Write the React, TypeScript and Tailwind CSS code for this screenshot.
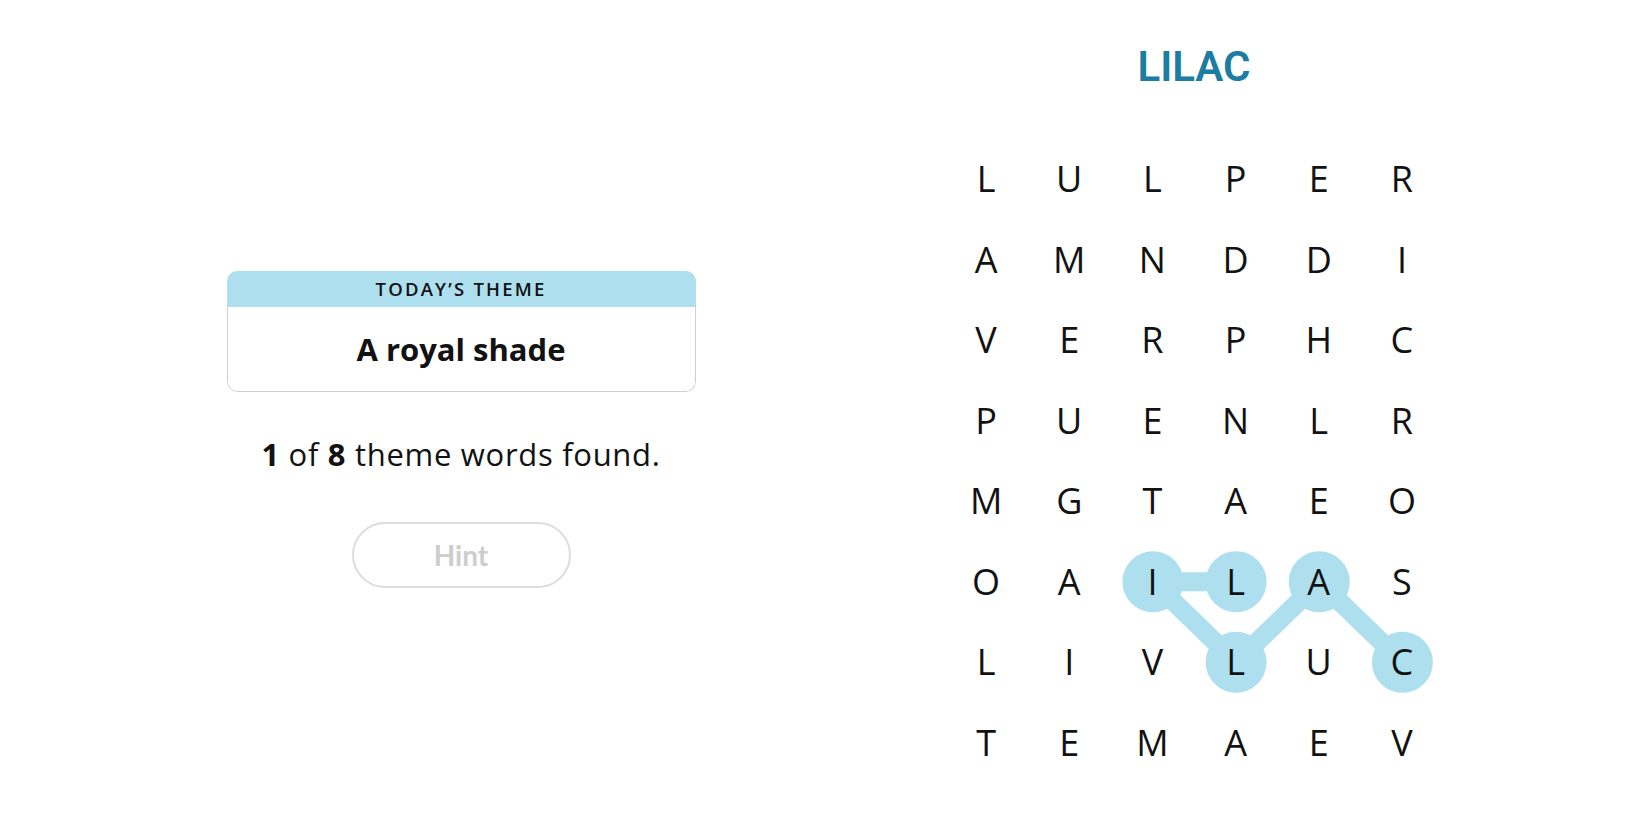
const grid = [
  "LULPER",
  "AMNDDI",
  "VERPHC",
  "PUENLR",
  "MGTAEO",
  "OAILAS",
  "LIVLUC",
  "TEMAEV",
]

const CW = 499 / 6
const RH = 80.5

// path of the found word, as [col, row]
const found: [number, number][] = [
  [3, 5],
  [2, 5],
  [3, 6],
  [4, 5],
  [5, 6],
]

const cx = (c: number) => CW * c + CW / 2
const cy = (r: number) => RH * r + RH / 2

function ThemeCard() {
  return (
    <div className="w-[469px] rounded-[10px] overflow-hidden">
      <div className="h-[36px] bg-[#aedfee] flex items-center justify-center">
        <span className="text-[18.5px] font-semibold tracking-[2.2px] text-[#121212]">
          TODAY’S THEME
        </span>
      </div>
      <div className="h-[85px] border-x border-b border-[#d0d0d0] rounded-b-[10px] flex items-center justify-center">
        <span className="text-[31px] font-bold text-[#121212]">A royal shade</span>
      </div>
    </div>
  )
}

function Board() {
  const pts = found.map(([c, r]) => `${cx(c)},${cy(r)}`).join(" ")
  return (
    <div className="relative w-[499px]">
      <svg className="absolute inset-0" width={499} height={RH * 8}>
        <polyline points={pts} fill="none" stroke="#aedfee" strokeWidth={19} strokeLinejoin="round" />
        {found.map(([c, r]) => (
          <circle key={`${c}-${r}`} cx={cx(c)} cy={cy(r)} r={30.5} fill="#aedfee" />
        ))}
      </svg>
      <div className="relative grid grid-cols-6">
        {grid.map((row, r) =>
          row.split("").map((ch, c) => (
            <div key={`${r}-${c}`} className="h-[80.5px] flex items-center justify-center">
              <span className="text-[36px] leading-none text-[#121212]">{ch}</span>
            </div>
          ))
        )}
      </div>
    </div>
  )
}

export default function App() {
  return (
    <div className="w-[1650px] h-[825px] bg-white flex font-['Open_Sans',sans-serif] overflow-hidden">
      <div className="w-[922px] flex flex-col items-center pt-[271px]">
        <ThemeCard />
        <p className="mt-[44px] text-[31px] leading-[36px] tracking-[0.7px] text-[#121212]">
          <span className="font-bold">1</span> of <span className="font-bold">8</span> theme words found.
        </p>
        <button className="mt-[50px] w-[219px] h-[66px] rounded-full border-2 border-[#dcdcdc] bg-white flex items-center justify-center">
          <span className="font-['Lato',sans-serif] font-bold text-[28px] text-[#cdcdcd]">Hint</span>
        </button>
      </div>
      <div className="w-[544px] flex flex-col items-center pt-[42px]">
        <h1 className="font-['Roboto',sans-serif] font-semibold text-[42px] leading-[50px] text-[#1a7da1]">
          LILAC
        </h1>
        <div className="mt-[47px]">
          <Board />
        </div>
      </div>
    </div>
  )
}
